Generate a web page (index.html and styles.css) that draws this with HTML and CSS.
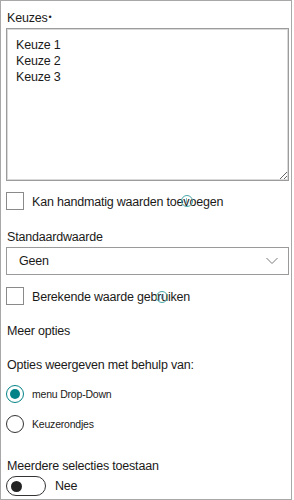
FILE: index.html
```html
<!DOCTYPE html>
<html>
<head>
<meta charset="utf-8">
<link rel="stylesheet" href="styles.css">
</head>
<body>
<div class="panel">
  <div class="label first">Keuzes<span class="req">•</span></div>
  <textarea class="choices">Keuze 1
Keuze 2
Keuze 3</textarea>

  <div class="check-row row1">
    <span class="box"></span>
    <span class="text">Kan handmatig waarden toevoegen</span>
    <span class="cursor c1"></span>
  </div>

  <div class="label std">Standaardwaarde</div>
  <div class="select">
    <span>Geen</span>
    <svg class="chev" width="12" height="8" viewBox="0 0 12 8"><path d="M0.5 1 L6 6.5 L11.5 1" fill="none" stroke="#7a7a7a" stroke-width="1"/></svg>
  </div>

  <div class="check-row row2">
    <span class="box"></span>
    <span class="text">Berekende waarde gebruiken</span>
    <span class="cursor c2"></span>
  </div>

  <div class="label more">Meer opties</div>
  <div class="label show">Opties weergeven met behulp van:</div>

  <div class="radio-row r1">
    <span class="radio on"><span class="dot"></span></span>
    <span class="rtext">menu Drop-Down</span>
  </div>
  <div class="radio-row r2">
    <span class="radio"></span>
    <span class="rtext">Keuzerondjes</span>
  </div>

  <div class="label multi">Meerdere selecties toestaan</div>
  <div class="toggle-row">
    <span class="toggle"><span class="knob"></span></span>
    <span class="ttext">Nee</span>
  </div>
</div>
</body>
</html>
```

FILE: styles.css
```css
html, body {
  margin: 0;
  padding: 0;
  background: #fff;
}
body {
  font-family: "Segoe UI", "Liberation Sans", Arial, sans-serif;
  color: #1b1a19;
  font-size: 12.5px;
  letter-spacing: -0.2px;
}
.panel {
  position: relative;
  width: 292px;
  height: 500px;
  box-sizing: border-box;
  border: 1px solid #a8a8a8;
  padding: 8px 2px 0 5px;
  display: flex;
  flex-direction: column;
}
.label {
  line-height: 16px;
  height: 16px;
  padding-left: 1px;
}
.req {
  font-size: 9px;
  vertical-align: 2px;
  margin-left: 1px;
}
.choices {
  margin-top: 3px;
  width: 283px;
  height: 153px;
  box-sizing: border-box;
  border: 1px solid #9c9c9c;
  box-shadow: inset 0 0 0 1px #d9d9d9;
  padding: 8px 9px;
  font-family: inherit;
  font-size: 12.5px;
  letter-spacing: -0.2px;
  line-height: 16px;
  color: #1b1a19;
  resize: vertical;
  outline: none;
  display: block;
}
.check-row {
  position: relative;
  display: flex;
  align-items: center;
  height: 18px;
  gap: 8px;
}
.row1 { margin-top: 11px; }
.row2 { margin-top: 12px; }
.box {
  width: 18px;
  height: 18px;
  box-sizing: border-box;
  border: 1px solid #8a8a8a;
  background: #fff;
  flex: none;
}
.check-row .text {
  padding-top: 2px;
}
.cursor {
  position: absolute;
  width: 12px;
  height: 12px;
  box-sizing: border-box;
  border: 1px solid #4aa8a8;
  border-radius: 50%;
}
.cursor::after {
  content: "";
  position: absolute;
  left: 4px;
  top: 2px;
  width: 1px;
  height: 5px;
  background: #7cc0c0;
}
.c1 { left: 175px; top: 3px; }
.c2 { left: 150px; top: 4px; }
.std { margin-top: 19px; }
.select {
  margin-top: 2px;
  height: 28px;
  box-sizing: border-box;
  border: 1px solid #9a9a9a;
  display: flex;
  align-items: center;
  justify-content: space-between;
  padding: 0 10px 0 12px;
}
.more { margin-top: 18px; }
.show { margin-top: 18px; }
.radio-row {
  display: flex;
  align-items: center;
  height: 18px;
  gap: 8px;
  font-size: 10.5px;
}
.r1 { margin-top: 12px; }
.r2 { margin-top: 12px; }
.radio {
  width: 18px;
  height: 18px;
  box-sizing: border-box;
  border: 1px solid #333;
  border-radius: 50%;
  flex: none;
  display: flex;
  align-items: center;
  justify-content: center;
}
.radio.on {
  border-color: #038387;
}
.radio .dot {
  width: 10px;
  height: 10px;
  border-radius: 50%;
  background: #038387;
}
.multi { margin-top: 25px; }
.toggle-row {
  margin-top: 2px;
  display: flex;
  align-items: center;
  gap: 9px;
  height: 20px;
}
.toggle {
  width: 40px;
  height: 20px;
  box-sizing: border-box;
  border: 1px solid #333;
  border-radius: 10px;
  display: flex;
  align-items: center;
  padding-left: 4px;
  flex: none;
}
.knob {
  width: 11px;
  height: 11px;
  border-radius: 50%;
  background: #222;
}
.ttext {
  font-size: 12.5px;
}
```
